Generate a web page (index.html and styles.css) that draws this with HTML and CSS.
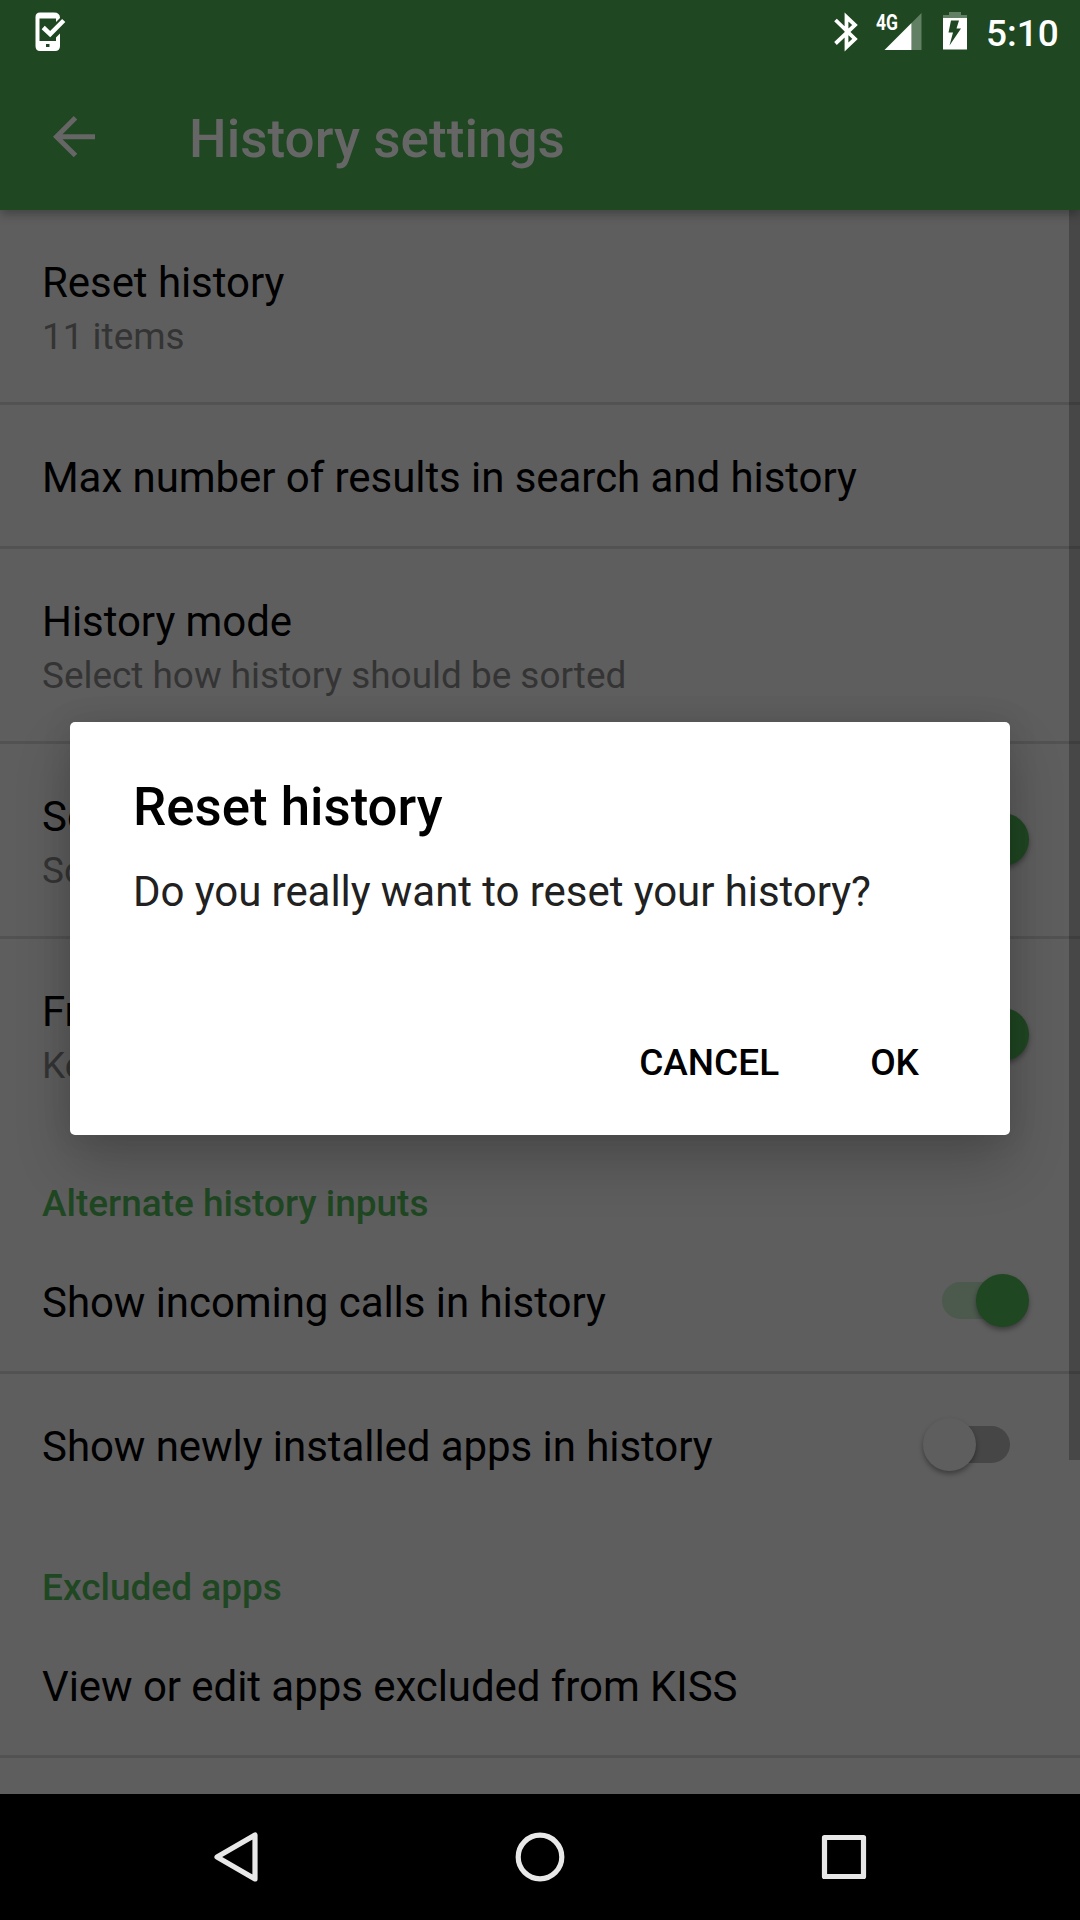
FILE: index.html
```html
<!DOCTYPE html>
<html lang="en">
<head>
<meta charset="utf-8">
<title>History settings</title>
<link rel="stylesheet" href="styles.css">
</head>
<body>
<div class="screen">
  <header class="header">
    <div class="status">
      <svg class="status-app" width="34" height="42" viewBox="0 0 34 42">
        <path fill="#fff" fill-rule="evenodd" d="M7 2.500H21Q27 2.500 27 8L23 12V8.500H6.500V31H23V27.500L27 23.500V36Q27 41 22 41H7Q2.500 41 2.500 36V7Q2.500 2.500 7 2.500ZM13 34V37H16.500V34Z"/>
        <path d="M10.500 18.500L17.500 25.500L30.500 12.500" transform="translate(-.5 -1)" fill="none" stroke="#1f4722" stroke-width="8"/>
        <path d="M10.500 18.500L17.500 25.200L31 11.500" transform="translate(-.3 -1)" fill="none" stroke="#fff" stroke-width="4.500"/>
      </svg>
      <div class="status-right">
        <svg width="26" height="40" viewBox="0 0 26 40"><path d="M2.500 8L22 27L13.500 35V5L22 13L2.500 31.500" fill="none" stroke="#fff" stroke-width="3.800"/></svg>
        <svg class="signal" width="46" height="40" viewBox="0 0 46 40">
          <path d="M45.500 0V37H35.500V10Z" fill="#628064"/>
          <path d="M35.500 10V37H8.500Z" fill="#fff"/>
          <text x="0" y="16.500" font-size="22" textLength="22" lengthAdjust="spacingAndGlyphs">4G</text>
        </svg>
        <svg class="battery" width="24" height="38" viewBox="0 0 24 38">
          <path d="M6 0H18V3H24V6.500H0V3H6Z" fill="#628064"/>
          <path d="M0 6H24V37.500H0Z" fill="#fff"/>
          <path d="M8 8.500H16L13.500 16.500H18L6.500 33.500L10 20.500H5.500Z" fill="#1f4722"/>
        </svg>
        <span class="clock">5:10</span>
      </div>
    </div>
    <div class="toolbar">
      <svg width="43" height="42" viewBox="0 0 43 42"><path d="M42 20.700H4M22.500 1.800L3.500 20.700L22.500 39.500" fill="none" stroke="#666" stroke-width="5"/></svg>
      <h1 class="toolbar-title">History settings</h1>
    </div>
  </header>
  <main class="list">
    <div class="row tall"><div class="title">Reset history</div><div class="summary">11 items</div></div>
    <div class="row"><div class="title">Max number of results in search and history</div></div>
    <div class="row tall"><div class="title">History mode</div><div class="summary">Select how history should be sorted</div></div>
    <div class="row tall with-switch">
      <div><div class="title">Sort</div><div class="summary">Sort</div></div>
      <div class="switch on"><i class="track"></i><i class="thumb"></i></div>
    </div>
    <div class="row tall with-switch last">
      <div><div class="title">Freeze</div><div class="summary">Keep</div></div>
      <div class="switch on"><i class="track"></i><i class="thumb"></i></div>
    </div>
    <h2 class="category">Alternate history inputs</h2>
    <div class="row with-switch"><div class="title">Show incoming calls in history</div><div class="switch on"><i class="track"></i><i class="thumb"></i></div></div>
    <div class="row with-switch last"><div class="title">Show newly installed apps in history</div><div class="switch"><i class="track"></i><i class="thumb"></i></div></div>
    <h2 class="category">Excluded apps</h2>
    <div class="row"><div class="title">View or edit apps excluded from KISS</div></div>
    <div class="scrollbar"></div>
  </main>
  <nav class="navbar">
    <svg width="52" height="52" viewBox="0 0 52 52"><path d="M45 4V48L7 26Z"/></svg>
    <svg width="52" height="52" viewBox="0 0 52 52"><circle cx="26" cy="26" r="21.800"/></svg>
    <svg width="52" height="52" viewBox="0 0 52 52"><rect x="6.500" y="6.500" width="39" height="39"/></svg>
  </nav>
  <section class="dialog">
    <h2 class="dialog-title">Reset history</h2>
    <p class="dialog-text">Do you really want to reset your history?</p>
    <div class="actions"><span>CANCEL</span><span>OK</span></div>
  </section>
</div>
</body>
</html>
```
FILE: styles.css
```css
* { box-sizing: border-box; }
body { margin: 0; font-family: Roboto, sans-serif; background: #5e5e5e; }
h1, h2, p { margin: 0; font-weight: 500; }
svg { display: block; flex: none; }

.screen {
  position: relative;
  display: flex;
  flex-direction: column;
  width: 1080px;
  height: 1920px;
  overflow: hidden;
}

.header {
  flex: none;
  height: 210px;
  background: #1f4722;
  box-shadow: 0 4px 10px rgba(0, 0, 0, .3);
  z-index: 1;
}
.status {
  display: flex;
  justify-content: space-between;
  height: 63px;
  padding: 10px 22px 0 33px;
}
.status-right { display: flex; padding-top: 2px; }
.signal { margin: 1px 0 0 17px; overflow: visible; }
.signal text { font-weight: 700; fill: #fff; }
.battery { margin-left: 21px; }
.clock {
  width: 72px;
  margin: 0 -1px 0 20px;
  font-size: 37px;
  line-height: 43px;
  font-weight: 500;
  text-indent: -1px;
  color: #fff;
}
.toolbar { display: flex; align-items: flex-start; padding: 53px 0 0 53px; }
.toolbar-title {
  margin: -8px 0 0 93px;
  font-size: 53px;
  line-height: 62px;
  letter-spacing: .05px;
  color: #666;
}

.list { position: relative; flex: 1; overflow: hidden; }
.row {
  height: 144px;
  padding: 47px 42px 0;
  border-bottom: 3px solid #525252;
}
.tall { height: 195px; }
.last { height: 141px; border-bottom: 0; }
.tall.last { height: 192px; }
.title {
  font-size: 42px;
  line-height: 52px;
  letter-spacing: -.06px;
  color: #000;
  white-space: nowrap;
}
.summary { margin-top: 4px; font-size: 36.9px; line-height: 48px; color: #343434; }
.with-switch { display: flex; justify-content: space-between; }
.category {
  height: 99px;
  padding: 49px 42px 0;
  font-size: 37px;
  line-height: 48px;
  color: #1f4722;
}

.switch { position: relative; width: 105px; height: 53px; margin: -3px 9px 0 0; }
.tall .switch { margin-top: 22px; }
.track {
  position: absolute;
  top: 8px;
  left: 18px;
  width: 68px;
  height: 37px;
  border-radius: 19px;
  background: #464646;
}
.thumb {
  position: absolute;
  top: 0;
  left: -1px;
  width: 53px;
  height: 53px;
  border-radius: 50%;
  background: #5e5e5e;
  box-shadow: 0 3px 5px rgba(0, 0, 0, .35);
}
.on .track { background: #4c594d; }
.on .thumb { left: 52px; background: #1f4722; }

.scrollbar {
  position: absolute;
  top: 0;
  right: 0;
  width: 11px;
  height: 1250px;
  background: rgba(0, 0, 0, .235);
}

.navbar {
  flex: none;
  display: flex;
  justify-content: space-between;
  align-items: center;
  height: 126px;
  padding: 0 210px;
  background: #000;
}
.navbar svg { fill: none; stroke: #e8e8e8; stroke-width: 5.2; stroke-linejoin: round; }

.dialog {
  position: absolute;
  z-index: 2;
  top: 722px;
  left: 70px;
  width: 940px;
  height: 413px;
  padding: 54px 63px 0;
  border-radius: 5px;
  background: #fff;
  box-shadow: 0 28px 56px rgba(0, 0, 0, .2), 0 0 30px rgba(0, 0, 0, .1);
}
.dialog-title { font-size: 52.8px; line-height: 62px; color: #000; }
.dialog-text {
  margin-top: 28px;
  font-size: 42px;
  line-height: 52px;
  letter-spacing: -.06px;
  font-weight: 400;
  color: #212121;
}
.actions {
  display: flex;
  justify-content: flex-end;
  gap: 91px;
  margin: 121px 28px 0 0;
  font-size: 37px;
  line-height: 48px;
  font-weight: 500;
  color: #000;
}
```
